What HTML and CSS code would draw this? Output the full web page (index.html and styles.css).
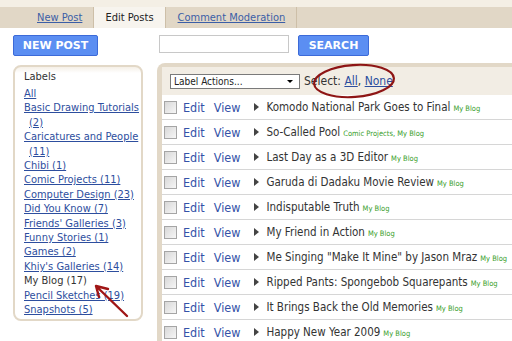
FILE: index.html
```html
<!DOCTYPE html>
<html>
<head>
<link rel="stylesheet" href="styles.css">
</head>
<body>

<div class="topStrip"></div>
<div class="tabBar">
  <div class="tab"><a href="#">New Post</a></div>
  <div class="tab activeTab">Edit Posts</div>
  <div class="tab"><a href="#">Comment Moderation</a></div>
</div>

<div class="toolbar">
  <button type="button" class="blueButton newPostButton">NEW POST</button>
  <input type="text" class="searchBox">
  <button type="button" class="blueButton searchButton">SEARCH</button>
</div>

<div class="mainArea">

  <div class="labelsPanel">
    <div class="labelsTitle">Labels</div>
    <ul class="labelList">
      <li><a href="#">All</a></li>
      <li><a href="#">Basic Drawing Tutorials (2)</a></li>
      <li><a href="#">Caricatures and People (11)</a></li>
      <li><a href="#">Chibi (1)</a></li>
      <li><a href="#">Comic Projects (11)</a></li>
      <li><a href="#">Computer Design (23)</a></li>
      <li><a href="#">Did You Know (7)</a></li>
      <li><a href="#">Friends' Galleries (3)</a></li>
      <li><a href="#">Funny Stories (1)</a></li>
      <li><a href="#">Games (2)</a></li>
      <li><a href="#">Khiy's Galleries (14)</a></li>
      <li class="currentLabel">My Blog (17)</li>
      <li><a href="#">Pencil Sketches (19)</a></li>
      <li><a href="#">Snapshots (5)</a></li>
    </ul>
  </div>

  <div class="postsPanel">
    <div class="postsHeader">
      <div class="labelSelect">Label Actions...<span class="selectArrow"></span></div>
      <span class="selectText">Select: <a href="#">All</a>, <a href="#">None</a></span>
    </div>

    <div class="postRow"><span class="checkBox"></span><a class="rowLink" href="#">Edit</a><a class="rowLink" href="#">View</a><span class="triangle"></span><span class="postTitle">Komodo National Park Goes to Final</span><span class="postLabel">My Blog</span></div>
    <div class="postRow"><span class="checkBox"></span><a class="rowLink" href="#">Edit</a><a class="rowLink" href="#">View</a><span class="triangle"></span><span class="postTitle">So-Called Pool</span><span class="postLabel">Comic Projects, My Blog</span></div>
    <div class="postRow"><span class="checkBox"></span><a class="rowLink" href="#">Edit</a><a class="rowLink" href="#">View</a><span class="triangle"></span><span class="postTitle">Last Day as a 3D Editor</span><span class="postLabel">My Blog</span></div>
    <div class="postRow"><span class="checkBox"></span><a class="rowLink" href="#">Edit</a><a class="rowLink" href="#">View</a><span class="triangle"></span><span class="postTitle">Garuda di Dadaku Movie Review</span><span class="postLabel">My Blog</span></div>
    <div class="postRow"><span class="checkBox"></span><a class="rowLink" href="#">Edit</a><a class="rowLink" href="#">View</a><span class="triangle"></span><span class="postTitle">Indisputable Truth</span><span class="postLabel">My Blog</span></div>
    <div class="postRow"><span class="checkBox"></span><a class="rowLink" href="#">Edit</a><a class="rowLink" href="#">View</a><span class="triangle"></span><span class="postTitle">My Friend in Action</span><span class="postLabel">My Blog</span></div>
    <div class="postRow"><span class="checkBox"></span><a class="rowLink" href="#">Edit</a><a class="rowLink" href="#">View</a><span class="triangle"></span><span class="postTitle">Me Singing "Make It Mine" by Jason Mraz</span><span class="postLabel">My Blog</span></div>
    <div class="postRow"><span class="checkBox"></span><a class="rowLink" href="#">Edit</a><a class="rowLink" href="#">View</a><span class="triangle"></span><span class="postTitle">Ripped Pants: Spongebob Squarepants</span><span class="postLabel">My Blog</span></div>
    <div class="postRow"><span class="checkBox"></span><a class="rowLink" href="#">Edit</a><a class="rowLink" href="#">View</a><span class="triangle"></span><span class="postTitle">It Brings Back the Old Memories</span><span class="postLabel">My Blog</span></div>
    <div class="postRow"><span class="checkBox"></span><a class="rowLink" href="#">Edit</a><a class="rowLink" href="#">View</a><span class="triangle"></span><span class="postTitle">Happy New Year 2009</span><span class="postLabel">My Blog</span></div>
  </div>

</div>

<svg class="annotations" width="512" height="341" viewBox="0 0 512 341">
  <ellipse cx="354" cy="81" rx="40" ry="16" fill="none" stroke="#8e1515" stroke-width="2.2" transform="rotate(-4 354 81)"/>
  <path d="M127 316 L96 286 M96 286 L108 289 M96 286 L99 297" fill="none" stroke="#a01616" stroke-width="2.4" stroke-linecap="round"/>
</svg>

</body>
</html>
```

FILE: styles.css
```css
html {
	overflow: hidden;
}

body {
	margin: 0;
	background: #ffffff;
	font-family: "DejaVu Sans Condensed", "DejaVu Sans", sans-serif;
	font-stretch: condensed;
	overflow: hidden;
	width: 512px;
	height: 341px;
}

a {
	color: #2d4e9e;
}

.topStrip {
	height: 7px;
	background: #f4efe5;
}

.tabBar {
	display: flex;
	height: 21px;
	background: #e1d7c6;
	padding-left: 25px;
}

.tab {
	display: flex;
	align-items: center;
	padding: 0 11px 0 12px;
	border-right: 1px solid #cdbfa8;
	font-size: 11px;
	color: #222;
}

.activeTab {
	background: #f7f4ee;
	padding: 0 11px 0 11px;
}

.tab a {
	color: #3b5ea6;
}

.toolbar {
	display: flex;
	align-items: flex-start;
	padding: 7px 0 0 13px;
	height: 28px;
}

.blueButton {
	height: 21px;
	background: #5b8ef2;
	border: 1px solid #3c6ad8;
	border-radius: 2px;
	color: #ffffff;
	font-family: "DejaVu Sans", sans-serif;
	font-weight: bold;
	font-size: 11px;
	padding: 0;
}

.newPostButton {
	width: 85px;
}

.searchBox {
	margin-left: 61px;
	width: 130px;
	height: 18px;
	box-sizing: border-box;
	border: 1px solid #c8c8c8;
	padding: 0;
}

.searchButton {
	margin-left: 9px;
	width: 71px;
}

.mainArea {
	display: flex;
	align-items: flex-start;
	padding-left: 13px;
}

.labelsPanel {
	flex: none;
	width: 130px;
	box-sizing: border-box;
	margin-top: 2px;
	border: 2px solid #e2d8c7;
	border-radius: 8px;
	padding: 3px 2px 1px 9px;
	font-size: 11px;
	background: linear-gradient(#f5f0e7, #ffffff 6px);
}

.labelsTitle {
	color: #333;
	height: 17px;
}

.labelList {
	list-style: none;
	margin: 0;
	padding: 0;
}

.labelList li {
	line-height: 14.4px;
	padding-left: 5px;
	text-indent: -5px;
}

.currentLabel {
	color: #333;
}

.postsPanel {
	flex: 1;
	margin-left: 14px;
	border-top: 4px solid #e2d8c7;
	border-left: 5px solid #e2d8c7;
	border-top-left-radius: 8px;
	margin-right: -10px;
}

.postsHeader {
	display: flex;
	align-items: center;
	height: 28px;
	background: #f2ede4;
	padding-left: 8px;
	font-size: 11px;
	color: #333;
}

.labelSelect {
	position: relative;
	width: 130px;
	height: 15px;
	box-sizing: border-box;
	border: 1px solid #7a7a7a;
	background: #ffffff;
	font-size: 10px;
	line-height: 13px;
	padding-left: 3px;
	color: #222;
}

.selectArrow {
	position: absolute;
	right: 6px;
	top: 5px;
	border-left: 3px solid transparent;
	border-right: 3px solid transparent;
	border-top: 3px solid #000;
}

.selectText {
	margin-left: 4px;
	font-size: 12px;
}

.postRow {
	display: flex;
	align-items: center;
	height: 24px;
	border-bottom: 1px solid #d6d6d6;
	white-space: nowrap;
	font-size: 11.5px;
}

.checkBox {
	width: 11px;
	height: 11px;
	margin-left: 2px;
	border: 1px solid #a5a5a5;
	background: linear-gradient(135deg, #d8d8d8, #f6f6f6);
}

.rowLink {
	text-decoration: none;
	color: #3452a8;
	font-size: 12.5px;
	margin-left: 6px;
}

.rowLink + .rowLink {
	margin-left: 9px;
}

.triangle {
	margin-left: 14px;
	border-top: 4px solid transparent;
	border-bottom: 4px solid transparent;
	border-left: 5px solid #444;
}

.postTitle {
	margin-left: 7px;
	color: #333;
}

.postLabel {
	margin-left: 3px;
	font-size: 7.5px;
	color: #3aa02c;
	padding-top: 2px;
}

.annotations {
	position: absolute;
	left: 0;
	top: 0;
	pointer-events: none;
}
```
